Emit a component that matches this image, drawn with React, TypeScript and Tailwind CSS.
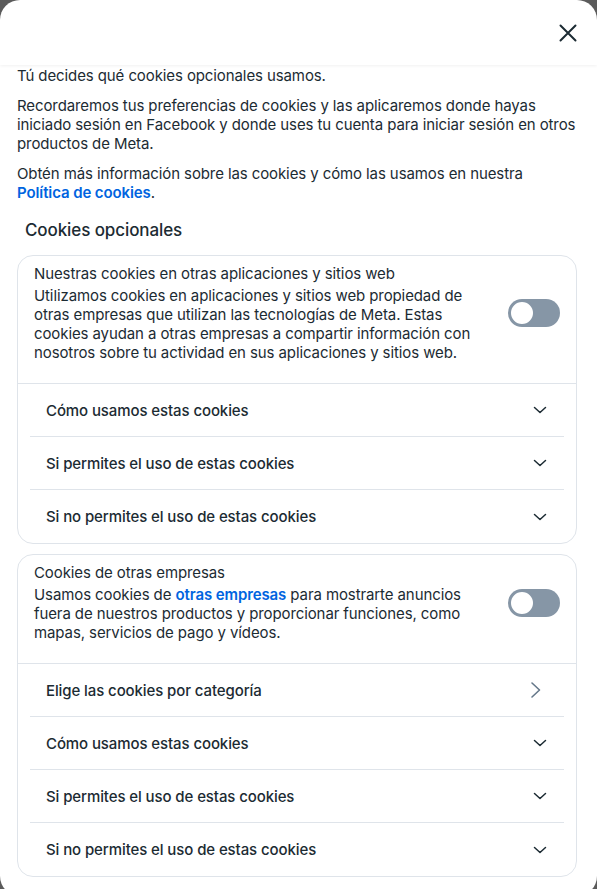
import React from 'react';

const textFont = { fontFamily: 'Inter, "Noto Sans", sans-serif' };

const Chevron = ({ right = false }: { right?: boolean }) =>
  right ? (
    <svg width="12" height="18" viewBox="0 0 12 18" fill="none" className="text-[#65788a]">
      <path d="M2 2l7.5 7-7.5 7" stroke="currentColor" strokeWidth="1.6" strokeLinecap="round" strokeLinejoin="round" />
    </svg>
  ) : (
    <svg width="14" height="8" viewBox="0 0 14 8" fill="none" className="text-[#1c2b33]">
      <path d="M1.5 1.5l5.5 5 5.5-5" stroke="currentColor" strokeWidth="1.5" strokeLinecap="round" strokeLinejoin="round" />
    </svg>
  );

const Toggle = () => (
  <div className="relative w-[52px] h-[28px] shrink-0 rounded-full bg-[#8696a6]">
    <div className="absolute left-[1px] top-[1px] w-[26px] h-[26px] rounded-full bg-white border-2 border-[#8696a6]" />
  </div>
);

type Row = { label: string; arrow?: boolean };

const Section = ({ title, body, rows }: { title: string; body: React.ReactNode; rows: Row[] }) => (
  <div className="border border-[#dfe4ea] rounded-[16px] bg-white">
    <div className="flex items-center gap-4 pl-4 pr-4 pt-[8px] pb-[21px] border-b border-[#dfe4ea]">
      <div className="w-[458px]">
        <div className="text-[15px] leading-[20px] text-[#1c2b33]">{title}</div>
        <div className="mt-[2px] text-[15px] leading-[19px] text-[#1c2b33]">{body}</div>
      </div>
      <div className="ml-auto">
        <Toggle />
      </div>
    </div>
    <div className="mx-[12px]">
      {rows.map((row, i) => (
        <div
          key={i}
          className={`flex items-center justify-between h-[53px] pl-4 pr-[16px] ${
            i < rows.length - 1 ? 'border-b border-[#dfe4ea]' : ''
          }`}
        >
          <span className="text-[15px] font-medium text-[#1c2b33]">{row.label}</span>
          <span className={row.arrow ? 'mr-[6px]' : 'mr-[1px]'}>
            <Chevron right={row.arrow} />
          </span>
        </div>
      ))}
    </div>
  </div>
);

const detailRows: Row[] = [
  { label: 'Cómo usamos estas cookies' },
  { label: 'Si permites el uso de estas cookies' },
  { label: 'Si no permites el uso de estas cookies' },
];

export default function App() {
  return (
    <div className="w-[597px] h-[889px] bg-[#5b5b5b] overflow-hidden tracking-[-0.1px]" style={textFont}>
      <div className="h-[896px] bg-white rounded-[20px] flex flex-col overflow-hidden">
        <div className="h-[65px] shrink-0 flex items-center justify-end pr-[20px] shadow-[0_1px_3px_rgba(0,0,0,0.06)] relative z-10">
          <svg width="18" height="18" viewBox="0 0 18 18" fill="none" className="text-[#1c2b33]">
            <path d="M1.5 1.5l15 15M16.5 1.5l-15 15" stroke="currentColor" strokeWidth="2" strokeLinecap="round" />
          </svg>
        </div>

        <div className="pl-[17px] pr-[20px] text-[15px] leading-[19px] text-[#1c2b33]">
          <p className="mt-[1px]">Tú decides qué cookies opcionales usamos.</p>
          <p className="mt-[11px]">
            Recordaremos tus preferencias de cookies y las aplicaremos donde hayas iniciado sesión en Facebook y donde
            uses tu cuenta para iniciar sesión en otros productos de Meta.
          </p>
          <p className="mt-[11px]">
            Obtén más información sobre las cookies y cómo las usamos en nuestra{' '}
            <span className="font-semibold text-[#0064e0]">Política de cookies</span>.
          </p>

          <h2 className="mt-[17px] ml-[8px] text-[17px] leading-[22px] font-medium">Cookies opcionales</h2>

          <div className="mt-[14px] flex flex-col gap-[10px]">
            <Section
              title="Nuestras cookies en otras aplicaciones y sitios web"
              body="Utilizamos cookies en aplicaciones y sitios web propiedad de otras empresas que utilizan las tecnologías de Meta. Estas cookies ayudan a otras empresas a compartir información con nosotros sobre tu actividad en sus aplicaciones y sitios web."
              rows={detailRows}
            />
            <Section
              title="Cookies de otras empresas"
              body={
                <>
                  Usamos cookies de <span className="font-semibold text-[#0064e0]">otras empresas</span> para
                  mostrarte anuncios fuera de nuestros productos y proporcionar funciones, como mapas, servicios de
                  pago y vídeos.
                </>
              }
              rows={[{ label: 'Elige las cookies por categoría', arrow: true }, ...detailRows]}
            />
          </div>
        </div>
      </div>
    </div>
  );
}
